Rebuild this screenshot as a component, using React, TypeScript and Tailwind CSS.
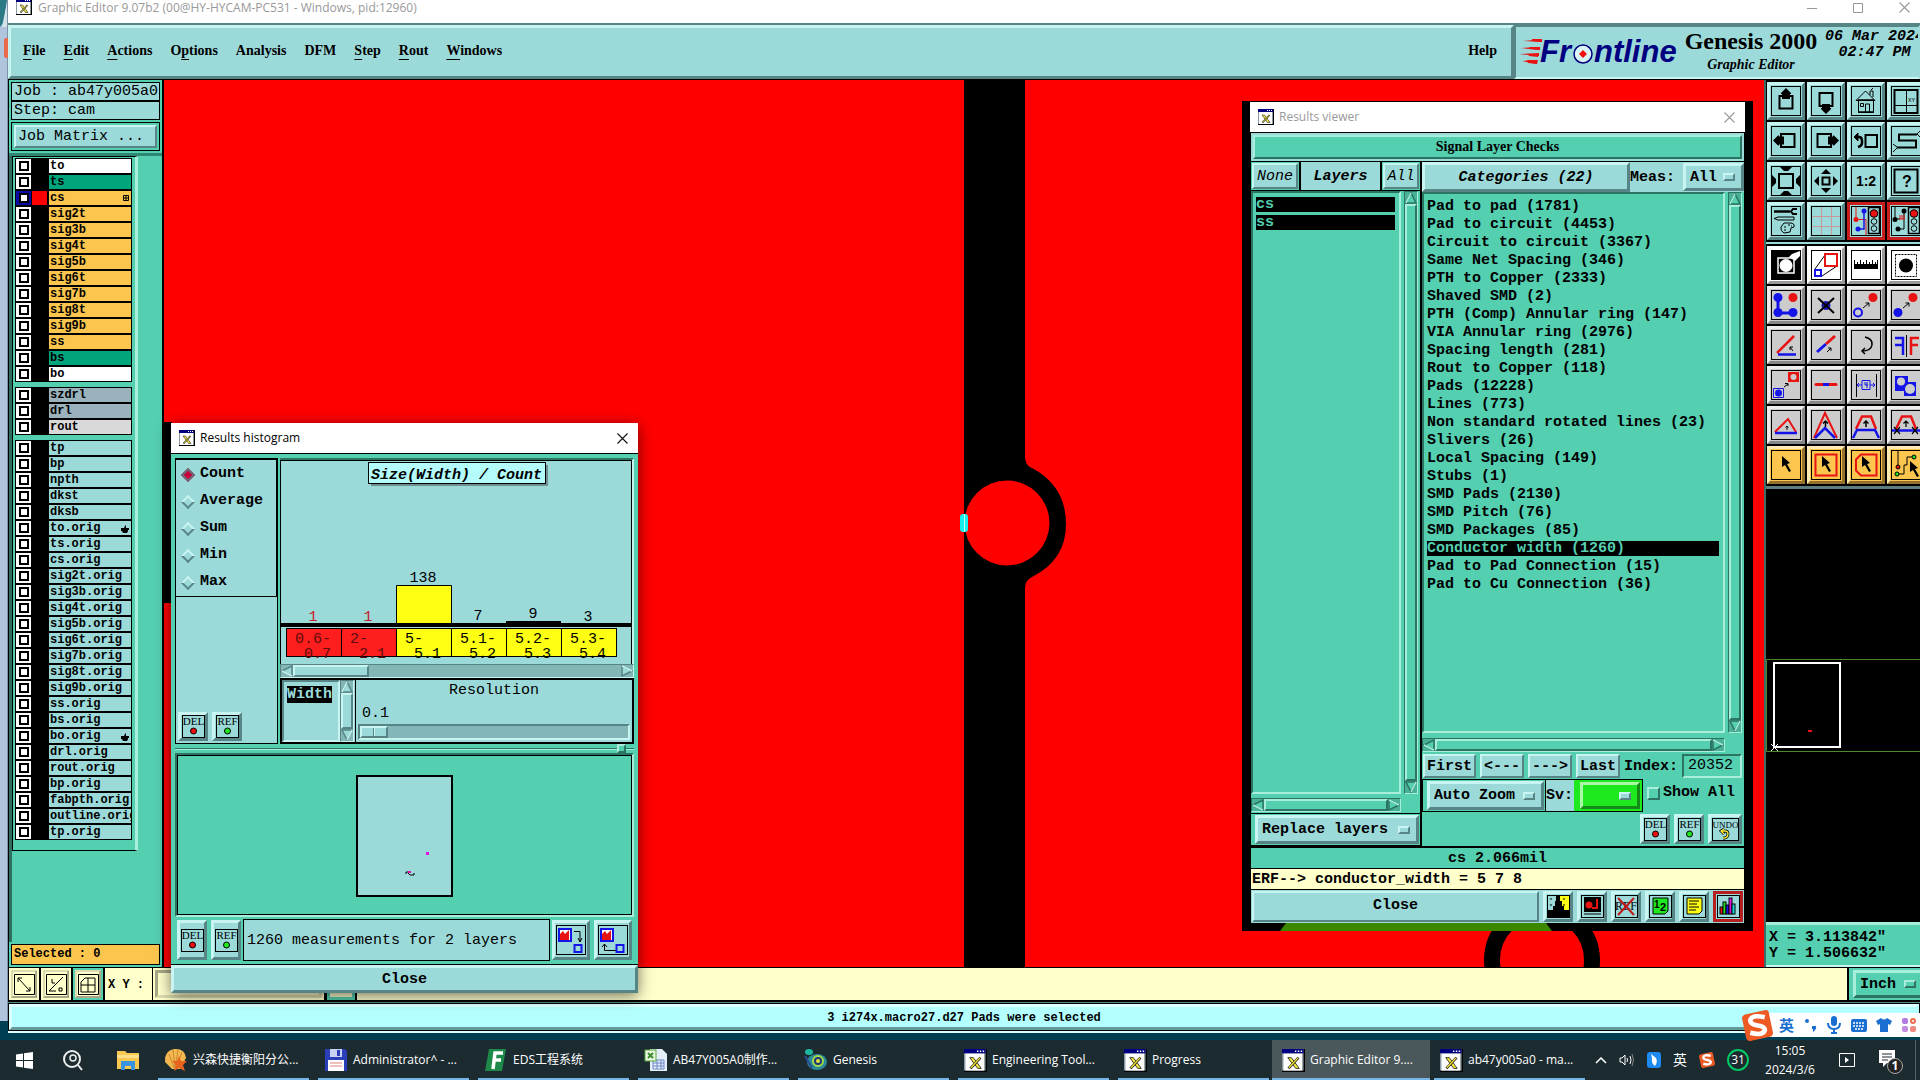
import { ReactNode } from "react";
import clsx from "clsx";

const mono = "font-['Liberation_Mono',monospace]";
const serif = "font-['Liberation_Serif',serif]";
const sans = "font-['Open_Sans','Noto_Sans_CJK_SC',sans-serif]";

const raised =
  "border-t-[#c8f4f2] border-l-[#c8f4f2] border-b-[#578585] border-r-[#578585] bg-[#9cdada]";
const raisedTeal =
  "border-t-[#a9eedb] border-l-[#a9eedb] border-b-[#2c7462] border-r-[#2c7462] bg-[#54cfb0]";
const sunkenTeal =
  "border-t-[#2c7462] border-l-[#2c7462] border-b-[#a9eedb] border-r-[#a9eedb] bg-[#54cfb0]";
const sunken =
  "border-t-[#578585] border-l-[#578585] border-b-[#c8f4f2] border-r-[#c8f4f2] bg-[#9cdada]";

const layerGroups = [
  [
    { name: "to", bg: "bg-white" },
    { name: "ts", bg: "bg-[#00a57c]" },
    { name: "cs", bg: "bg-[#fcc54e]", active: true },
    { name: "sig2t", bg: "bg-[#fcc54e]" },
    { name: "sig3b", bg: "bg-[#fcc54e]" },
    { name: "sig4t", bg: "bg-[#fcc54e]" },
    { name: "sig5b", bg: "bg-[#fcc54e]" },
    { name: "sig6t", bg: "bg-[#fcc54e]" },
    { name: "sig7b", bg: "bg-[#fcc54e]" },
    { name: "sig8t", bg: "bg-[#fcc54e]" },
    { name: "sig9b", bg: "bg-[#fcc54e]" },
    { name: "ss", bg: "bg-[#fcc54e]" },
    { name: "bs", bg: "bg-[#00a57c]" },
    { name: "bo", bg: "bg-white" },
  ],
  [
    { name: "szdrl", bg: "bg-[#9ab2bc]" },
    { name: "drl", bg: "bg-[#9ab2bc]" },
    { name: "rout", bg: "bg-[#d9d9d9]" },
  ],
  [
    "tp", "bp", "npth", "dkst", "dksb", "to.orig", "ts.orig", "cs.orig",
    "sig2t.orig", "sig3b.orig", "sig4t.orig", "sig5b.orig", "sig6t.orig",
    "sig7b.orig", "sig8t.orig", "sig9b.orig", "ss.orig", "bs.orig", "bo.orig",
    "drl.orig", "rout.orig", "bp.orig", "fabpth.orig", "outline.orig", "tp.orig",
  ].map((name) => ({ name, bg: "bg-[#9cdada]" })),
] as { name: string; bg: string; active?: boolean }[][];

const categories = [
  "Pad to pad (1781)",
  "Pad to circuit (4453)",
  "Circuit to circuit (3367)",
  "Same Net Spacing (346)",
  "PTH to Copper (2333)",
  "Shaved SMD (2)",
  "PTH (Comp) Annular ring (147)",
  "VIA Annular ring (2976)",
  "Spacing length (281)",
  "Rout to Copper (118)",
  "Pads (12228)",
  "Lines (773)",
  "Non standard rotated lines (23)",
  "Slivers (26)",
  "Local Spacing (149)",
  "Stubs (1)",
  "SMD Pads (2130)",
  "SMD Pitch (76)",
  "SMD Packages (85)",
  "Conductor width (1260)",
  "Pad to Pad Connection (15)",
  "Pad to Cu Connection (36)",
];

const bins = [
  { from: "0.6-", to: "0.7", count: 1, y: 160, red: true },
  { from: "2-", to: "2.1", count: 1, y: 160, red: true },
  { from: "5-", to: "5.1", count: 138, y: 121 },
  { from: "5.1-", to: "5.2", count: 7, y: 159 },
  { from: "5.2-", to: "5.3", count: 9, y: 157 },
  { from: "5.3-", to: "5.4", count: 3, y: 160 },
];

const XIcon = ({ size = 16 }: { size?: number }) => (
  <svg width={size} height={size} viewBox="0 0 16 16" className="shrink-0">
    <rect x="0" y="0" width="16" height="16" fill="#000" />
    <rect x="0" y="0" width="15" height="15" fill="#8a9aa0" />
    <rect x="1" y="3" width="13" height="12" fill="#fff" />
    <rect x="0" y="0" width="15" height="3" fill="#000080" />
    <path d="M9 1.500h1M11 1.500h1M13 1.500h1" stroke="#fff" />
    <path d="M4 6h2.500L12 13.500H9.500z" fill="#f3e63a" stroke="#222" strokeWidth="0.600" />
    <path d="M11.500 6L4.500 13.500" stroke="#222" strokeWidth="1.800" />
    <path d="M11.200 6.200L4.800 13" stroke="#f3e63a" strokeWidth="0.900" />
  </svg>
);

const CloseX = ({ color }: { color: string }) => (
  <svg width="11" height="11" viewBox="0 0 11 11">
    <path d="M0.5 0.5l10 10M10.500 0.5l-10 10" stroke={color} strokeWidth="1.100" />
  </svg>
);

const Arrow = ({ dir, teal }: { dir: "up" | "down" | "left" | "right"; teal?: boolean }) => {
  const turn = { up: 0, right: 90, down: 180, left: 270 }[dir];
  const dark = teal ? "#2c7462" : "#578585";
  const light = teal ? "#a9eedb" : "#c8f4f2";
  return (
    <svg width="12" height="12" viewBox="0 0 12 12" className="shrink-0">
      <path d="M6 1L11 11H1z" transform={`rotate(${turn} 6 6)`} fill={teal ? "#54cfb0" : "#9cdada"} stroke={dark} strokeWidth="1.500" />
      <path d="M6 1L1 11" transform={`rotate(${turn} 6 6)`} stroke={light} strokeWidth="1.500" />
    </svg>
  );
};

const Scrollbar = ({ vertical, teal, thumb }: { vertical?: boolean; teal?: boolean; thumb: string }) => (
  <div
    className={clsx(
      "flex shrink-0 items-stretch border",
      vertical ? "w-3.5 flex-col" : "h-3.5",
      teal ? "border-t-[#2c7462] border-l-[#2c7462] border-b-[#a9eedb] border-r-[#a9eedb] bg-[#48b196]" : "border-t-[#578585] border-l-[#578585] border-b-[#c8f4f2] border-r-[#c8f4f2] bg-[#83b7b7]"
    )}
  >
    <Arrow dir={vertical ? "up" : "left"} teal={teal} />
    <div className="flex min-h-0 min-w-0 flex-1 items-stretch">
      <div className={clsx("border-2", thumb, teal ? raisedTeal : raised)} />
    </div>
    <Arrow dir={vertical ? "down" : "right"} teal={teal} />
  </div>
);

const OptionMenu = ({ label, value, className, teal }: { label: string; value: string; className?: string; teal?: boolean }) => (
  <div className={clsx("flex items-center border-3 pr-1.5", className, !className?.includes("bg-[#1ee81e]") && (teal ? raisedTeal : raised))}>
    <select aria-label={label} className={clsx("min-w-0 flex-1 appearance-none bg-transparent pt-px pl-1 text-[15px] leading-5 font-bold outline-none", mono)}>
      <option>{value}</option>
    </select>
    <span className={clsx("h-2 w-3 shrink-0 border-2", teal ? raisedTeal : raised)} />
  </div>
);

const TextBtn = ({ text, dot, className }: { text: string; dot?: string; className?: string }) => (
  <button aria-label={text} className={clsx("flex items-center justify-center border-3", raised, className)}>
    <svg width={text === "UNDO" ? 27 : 23} height="23" viewBox={text === "UNDO" ? "0 0 27 23" : "0 0 23 23"}>
      <rect x="0.5" y="0.5" width={text === "UNDO" ? 26 : 22} height="22" fill="none" stroke="#000" />
      <text x={text === "UNDO" ? 13.500 : 11.500} y="10" textAnchor="middle" fontFamily="Liberation Serif, serif" fontSize={text === "UNDO" ? 9 : 11}>
        {text}
      </text>
      {dot ? (
        <circle cx="11.500" cy="16" r="3" fill={dot} stroke="#000" />
      ) : (
        <g fill="none">
          <path d="M10 13h3q3 0 3 3t-3 4h-2M12 11l-3 2 3 3" stroke="#000" strokeWidth="2.800" />
          <path d="M10 13h3q3 0 3 3t-3 4h-2M12 11l-3 2 3 3" stroke="#f6e73a" strokeWidth="1.300" />
        </g>
      )}
    </svg>
  </button>
);

const R = "#e81414";
const B = "#1414e8";

const Light = () => (
  <g>
    <rect x="17.500" y="1.500" width="11" height="26" fill="none" stroke="#000" strokeWidth="1.500" />
    <circle cx="23" cy="7.500" r="3.800" fill={R} stroke="#000" />
    <circle cx="23" cy="15.500" r="2.800" fill="none" stroke="#000" />
    <circle cx="23" cy="22.500" r="2.800" fill="none" stroke="#000" />
  </g>
);

const cursor = "M11 6l8 7-3 1 4 7-2 1-4-7-3 2z";

const viewTools: { name: string; icon: ReactNode; hot?: boolean }[] = [
  { name: "Pan up", icon: <><path d="M8.500 10h13v12.500h-13z" fill="none" stroke="#000" strokeWidth="2" /><path d="M15 2l5 5v1h-1v5h-8V8h-1V7z" /></> },
  { name: "Pan down", icon: <><path d="M8.500 7h13v13h-13z" fill="none" stroke="#000" strokeWidth="2" /><path d="M15 28l5-5v-1h-1v-4h-8v4h-1v1z" /></> },
  { name: "Home", icon: <g fill="none" stroke="#000"><path d="M5 14.500L14.500 5 24 14.500zM7.500 14.500v12h15v-12M19 9V5h3v6M20 4l2-2M14.500 26v-8h4v8M9.500 17.500h3v3h-3z" /><path d="M7 14h16M7 26h16" strokeWidth="1.500" /></g> },
  { name: "Zoom to XY", icon: <><path d="M3.500 4h23v23h-23z" fill="none" stroke="#000" strokeWidth="2" /><path d="M15.500 4v23M4 19.500h22" stroke="#000" /><text x="17" y="16" fontSize="6" fontFamily="Liberation Mono">XY</text></> },
  { name: "Pan left", icon: <><path d="M10 8h13.500v13H10z" fill="none" stroke="#000" strokeWidth="2" /><path d="M2 14.500l5-5h1v1h5v8H8v1H7z" /></> },
  { name: "Pan right", icon: <><path d="M6.500 8H20v13H6.500z" fill="none" stroke="#000" strokeWidth="2" /><path d="M28 14.500l-5-5h-1v1h-5v8h5v1h1z" /></> },
  { name: "Previous view", icon: <g fill="none" stroke="#000"><path d="M14.500 9H26v12H14.500z" strokeWidth="2" /><path d="M4 11h4q3 0 3 4v2q0 3-4 4" strokeWidth="2.500" /><path d="M7 7l-4 4 4 4z" fill="#000" /></g> },
  { name: "Snake", icon: <g fill="none" stroke="#000"><path d="M26 8.500H8v6h17v7H6" strokeWidth="2" /><path d="M26 8l3-3M26 8l3 3M6 21l-4-3M6 22l-4 4" /></g> },
  { name: "Zoom in", icon: <><path d="M8 8h14v14H8z" fill="none" stroke="#000" strokeWidth="2" /><path d="M9 1h12l-4 4h-4zM9 29h12l-4-4h-4zM1 9v12l4-4v-4zM29 9v12l-4-4v-4z" /></> },
  { name: "Zoom out", icon: <><path d="M11.500 11.500h7v7h-7z" fill="none" stroke="#000" strokeWidth="2" /><path d="M15 3l5 5H10zM15 27l5-5H10zM3 15l5-5v10zM27 15l-5-5v10z" /></> },
  { name: "Zoom 1:2", icon: <text x="15" y="20" textAnchor="middle" fontSize="14" fontWeight="bold" fontFamily="Liberation Sans">1:2</text> },
  { name: "Query", icon: <><path d="M3.500 3.500h23v23h-23z" fill="none" stroke="#000" strokeWidth="2" /><text x="16" y="21" textAnchor="middle" fontSize="16" fontWeight="bold" fontFamily="Liberation Sans">?</text></> },
  { name: "Settings", icon: <g fill="none" stroke="#000"><path d="M3 5.500h16" strokeWidth="2.500" /><path d="M26 3h-4l-2 2.500 2 2.500h4" strokeWidth="2" /><path d="M3 12.500l4-1.500h16v3H7z" /><path d="M13 17h6q5 0 4 4l-3 1-1 4-6 1q-4-2-3-6z" /><path d="M13 21h2M17 19h2M13 24h2M20 20h1" /></g> },
  { name: "Grid", icon: <path d="M10.500 1v28M20.500 1v28M1 10.500h28M1 20.500h28" stroke="#c9989c" /> },
  { name: "Net check", hot: true, icon: <><path d="M5 1v13M5 13.500h10V29" fill="none" stroke={R} /><path d="M13 4v19H7" fill="none" stroke={B} strokeWidth="1.500" /><circle cx="5" cy="13.500" r="2.500" fill={R} /><circle cx="13" cy="5" r="2.500" fill={B} /><circle cx="7" cy="23" r="2.500" fill={B} /><Light /></> },
  { name: "Spacing check", hot: true, icon: <><path d="M4 1v13M4 13h5M13 4v19H7" fill="none" stroke="#000" /><path d="M8 13h6M9 9v4M11 9v4M13 9v4" stroke={R} /><circle cx="4" cy="13.500" r="2.500" /><circle cx="13" cy="5" r="2.500" /><circle cx="7" cy="23" r="2.500" /><Light /></> },
];

const editTools: { name: string; tone: "white" | "gray" | "gold"; icon: ReactNode }[] = [
  { name: "Negative", tone: "white", icon: <><path d="M1 1h28v28H1z" /><path d="M7 8h16v15H7z" fill="none" stroke="#fff" strokeWidth="1.500" /><circle cx="15" cy="15.500" r="6.500" fill="#fff" /><path d="M18 7l3-3 8-3v5l-5 5z" fill="#fff" /></> },
  { name: "Scale", tone: "white", icon: <><path d="M4 19L14 5M11 26l15-10" stroke="#000" /><path d="M14 4h12v12H14z" fill="none" stroke={R} strokeWidth="2" /><path d="M4 20h6v6H4z" fill="none" stroke={B} strokeWidth="2" /></> },
  { name: "Ruler", tone: "white", icon: <><path d="M3 14h24v5H3z" /><path d="M3.500 10v5M6.500 12v3M9.500 10v5M12.500 12v3M15.500 10v5M18.500 12v3M21.500 10v5M24.500 12v3M26.500 10v5" stroke="#000" /></> },
  { name: "Pad select", tone: "white", icon: <><path d="M4.500 4.500h21v22h-21z" fill="none" stroke="#000" strokeDasharray="2 1" /><circle cx="15" cy="15.500" r="7" /></> },
  { name: "Move points", tone: "gray", icon: <><path d="M7 8v15h14" fill="none" stroke={B} strokeWidth="3" /><circle cx="7" cy="7.500" r="4.500" fill={B} /><circle cx="7" cy="22.500" r="4.500" fill={B} /><circle cx="22" cy="22.500" r="4.500" fill={B} /><circle cx="22" cy="7.500" r="4.500" fill={R} /></> },
  { name: "Delete", tone: "gray", icon: <><circle cx="15" cy="15.500" r="4.500" fill="#1a1ab8" /><path d="M7 8l16 15M23 8L7 23" stroke="#000" strokeWidth="2" /></> },
  { name: "Copy", tone: "gray", icon: <><circle cx="22" cy="7.500" r="4.500" fill={R} /><circle cx="7" cy="22.500" r="4" fill="none" stroke={B} strokeWidth="2" /><path d="M12 18l6-5M14.500 13H18v3.500" fill="none" stroke="#000" /></> },
  { name: "Move", tone: "gray", icon: <><circle cx="22" cy="7.500" r="4.500" fill={R} /><circle cx="7" cy="22.500" r="4.500" fill={B} /><path d="M12 18l6-5M14.500 13H18v3.500" fill="none" stroke="#000" /></> },
  { name: "Rotate line", tone: "gray", icon: <><path d="M6 23L23 6" stroke={R} strokeWidth="2.500" /><path d="M7 24.500h18" stroke={B} strokeWidth="2.500" /><path d="M22 21l-3-4M19 20v-3h3" fill="none" stroke="#000" /></> },
  { name: "Extend line", tone: "gray", icon: <><path d="M6 22l9-8" stroke={B} strokeWidth="3" /><path d="M15 14l9-8" stroke={R} strokeWidth="3" /><path d="M16 22l4-4M17 18h3v3" fill="none" stroke="#000" /></> },
  { name: "Arc", tone: "gray", icon: <g fill="none" stroke="#000" strokeWidth="1.500"><path d="M14 7q8 2 7 8-1 6-10 6M14 18l-3 3 3 3" /></g> },
  { name: "Mirror", tone: "gray", icon: <><path d="M4 8h8v17M4 15h8" fill="none" stroke={B} strokeWidth="2.500" /><path d="M15.500 5v22" stroke="#000" /><path d="M28 8h-8v17M20 15h7" fill="none" stroke={R} strokeWidth="2.500" /></> },
  { name: "Change symbol", tone: "gray", icon: <><path d="M17 2h11v10H17z" fill={R} /><circle cx="22.500" cy="7" r="3" fill="#ccc" /><path d="M2.500 18.500h10v9h-10z" fill="none" stroke={B} /><circle cx="7.500" cy="23" r="3.500" fill={B} /><path d="M13 17l4-3M14 13.500h3V16" fill="none" stroke="#000" /></> },
  { name: "Break line", tone: "gray", icon: <><path d="M5 14.500h20" stroke={R} strokeWidth="3" strokeLinecap="round" /><path d="M12 14.500h6" stroke={B} strokeWidth="3" /></> },
  { name: "Line gap", tone: "gray", icon: <g fill="none" stroke={B}><path d="M5.500 4v23M25.500 4v23" stroke="#000" /><path d="M11 10.500h8v9h-8zM6 15h5M19 15h5M8 13l-2 2 2 2M22 13l2 2-2 2M14 12v3h3M16 12v6" /></g> },
  { name: "Merge", tone: "gray", icon: <><path d="M4 6h13v6h8v14H13v-5H4z" fill={B} /><circle cx="10" cy="11.500" r="4" fill="#ccc" /><circle cx="19" cy="19" r="5" fill="#ccc" /></> },
  { name: "Triangle", tone: "gray", icon: <><path d="M4 22L17 9l8 13" fill="none" stroke={R} strokeWidth="2" /><path d="M4 23h22" stroke={B} strokeWidth="2.500" /><path d="M16 20v-4M14.500 17.500L16 16l1.500 1.500" fill="none" stroke="#000" /></> },
  { name: "Peak", tone: "gray", icon: <><path d="M3 28L14 3l12 25" fill="none" stroke={R} strokeWidth="2" /><path d="M4 28l10-10 10 10" fill="none" stroke={B} strokeWidth="2.500" /><path d="M14.500 17v-6M12 13.500l2.500-2.500 2.500 2.500" fill="none" stroke="#000" strokeWidth="1.500" /></> },
  { name: "Trapeze", tone: "gray", icon: <><path d="M5 19L11 6.500h9L25 19" fill="none" stroke={R} strokeWidth="2.500" /><path d="M2 28l4-8h18l4 8" fill="none" stroke={B} strokeWidth="2.500" /><path d="M15 17v-6M12.500 13.500L15 11l2.500 2.500" fill="none" stroke="#000" strokeWidth="1.500" /></> },
  { name: "Trapeze cut", tone: "gray", icon: <><path d="M5 19L11 6.500h9L25 19" fill="none" stroke={R} strokeWidth="2.500" /><path d="M1 20.500h28" stroke={B} strokeWidth="2.500" /><path d="M15 17v-6M12.500 13.500L15 11l2.500 2.500M3 17l6 7M9 17l-6 7M21 17l6 7M27 17l-6 7" fill="none" stroke="#000" strokeWidth="1.200" /></> },
  { name: "Select", tone: "gold", icon: <path d={cursor} /> },
  { name: "Frame select", tone: "gold", icon: <><path d="M4.500 4.500h21v21h-21z" fill="none" stroke={R} strokeWidth="2" /><path d={cursor} /></> },
  { name: "Polygon select", tone: "gold", icon: <><path d="M10 4.500h15.500v21H10l-5-5v-11z" fill="none" stroke={R} strokeWidth="2" /><path d={cursor} /></> },
  { name: "Net select", tone: "gold", icon: <><path d="M7 1v16M7 24h6v-9h3V7h7" fill="none" stroke="#000" /><circle cx="7" cy="17" r="2" fill={R} stroke="#000" /><circle cx="6" cy="24" r="2" fill="#1ee81e" stroke="#000" /><circle cx="23" cy="7" r="2" fill="#1ee81e" stroke="#000" /><path d={cursor} transform="translate(8 5)" /></> },
];

const tones = {
  white: "bg-white border-t-white border-l-white border-b-[#999] border-r-[#999]",
  gray: "bg-[#ccc] border-t-[#eee] border-l-[#eee] border-b-[#888] border-r-[#888]",
  gold: "bg-[#fcc54e] border-t-[#ffe9b4] border-l-[#ffe9b4] border-b-[#94712c] border-r-[#94712c]",
};

const ToolButton = ({ name, className, children }: { name: string; className: string; children: ReactNode }) => (
  <button aria-label={name} className={clsx("flex h-[38px] w-[38px] items-center justify-center border-3", className)}>
    <svg width="30" height="30" viewBox="0 0 30 30">
      <rect x="0.5" y="0.5" width="29" height="29" fill="none" stroke="#000" />
      {children}
    </svg>
  </button>
);

const MenuBar = () => {
  const menus = [
    ["", "F", "ile"],
    ["", "E", "dit"],
    ["", "A", "ctions"],
    ["O", "p", "tions"],
    ["Analysis", "", ""],
    ["DFM", "", ""],
    ["", "S", "tep"],
    ["", "R", "out"],
    ["", "W", "indows"],
  ];
  return (
    <header className="flex h-[57px] border-t-2 border-b border-t-[#578585] border-b-black bg-[#9cdada]">
      <nav className={clsx("flex flex-1 items-center gap-[18px] border-3 pr-3.5 pb-0.5 pl-3 text-sm font-bold", raised, serif)}>
        {menus.map(([pre, key, post]) => (
          <button key={pre + key + post}>
            {pre}
            <span className="underline decoration-1 underline-offset-4">{key}</span>
            {post}
          </button>
        ))}
        <button className="ml-auto">Help</button>
      </nav>
      <div className="flex w-[406px] shrink-0 overflow-hidden border-2 border-t-[#578585] border-r-transparent border-b-[#c8f4f2] border-l-[#578585] pl-0.5">
        <svg width="163" height="50" viewBox="0 0 163 50" className="shrink-0">
          <g fill={R}>
            <path d="M5 14l19-2v3zM2 21l20-1v3zM1 27l20-1v3zM4 34l15-1v4z" />
            <path d="M14 12h10l-1 3-9-1zM11 20h11l-1 3-9-1zM10 27h11l-1 3-9-1zM9 33h11l-1 4-9-1z" />
          </g>
          <g fill="#000080" fontFamily="Liberation Sans" fontWeight="bold" fontStyle="italic" fontSize="31">
            <text x="22" y="35">Fr</text>
            <text x="76" y="35">ntline</text>
          </g>
          <circle cx="65" cy="27" r="9" fill="#d9f4f4" stroke="#000080" strokeWidth="1.500" />
          <path d="M65 23l4 4-4 4-4-4z" fill="#f01010" />
        </svg>
        <div className={clsx("flex w-[140px] shrink-0 flex-col items-center font-bold", serif)}>
          <span className="text-2xl leading-7 whitespace-nowrap">Genesis 2000</span>
          <span className="text-sm leading-5 italic">Graphic Editor</span>
        </div>
        <div className={clsx("ml-1 pt-0.5 text-center text-[15px] leading-4 font-bold whitespace-nowrap italic", mono)}>
          <p>06 Mar 2024</p>
          <p>02:47 PM</p>
        </div>
      </div>
    </header>
  );
};

const LayerPanel = () => (
  <aside className={clsx("flex w-[156px] shrink-0 flex-col border-r-2 border-l border-black bg-[#54cfb0]", mono)}>
    <div className="border-b-3 border-[#2f8672] px-0.5 py-0.5 text-[15px]">
      <p className="h-[19px] border border-black bg-[#9cdada] px-0.5 leading-[18px] whitespace-pre">Job : ab47y005a0</p>
      <p className="h-[19px] border border-black bg-[#9cdada] px-0.5 leading-[18px] whitespace-pre">Step: cam</p>
      <div className="mt-0.5 border border-black p-0.5">
        <button className={clsx("block w-full border-2 px-0.5 text-left leading-[19px]", raised)}>Job Matrix ...</button>
      </div>
    </div>
    <div className="flex flex-1 flex-col items-start border-l-3 border-[#2f6e60]">
      <div className="flex w-[126px] flex-col gap-[5px] border border-r-3 border-black border-r-[#a9eedb] pt-px pr-[3px] pb-2.5 pl-0.5">
        {layerGroups.map((group, i) => (
          <ul key={i} className="bg-black px-px">
            {group.map((layer) => (
              <li key={layer.name + i} className="flex h-4 items-stretch border-t border-b border-black">
                <label className="flex w-full items-stretch">
                  <span className={clsx("flex w-[15px] shrink-0 items-center justify-center", layer.active ? "bg-[#0a0aa8]" : "bg-white")}>
                    <input type="checkbox" className="size-2.5 appearance-none border-2 border-black bg-white" />
                  </span>
                  <span className={clsx("mx-px w-[15px] shrink-0", layer.active ? "bg-[#ff0000]" : "bg-black")} />
                  <span className={clsx("relative ml-px flex flex-1 items-center overflow-hidden pl-px text-xs leading-[14px] font-bold", layer.bg)}>
                    {layer.name}
                    {layer.active && (
                      <svg width="6" height="6" className="absolute top-1 right-0.5"><path d="M.5.5h5v5h-5zM3 0v6M0 3h6" fill="none" stroke="#000" /></svg>
                    )}
                    {(layer.name === "to.orig" || layer.name === "bo.orig") && (
                      <svg width="8" height="8" viewBox="0 0 8 8" className="absolute top-1 right-0.5"><path d="M0 3h3l1-2 1-1 0 3h3v2H7v1L6 8H2L1 6H0z" /></svg>
                    )}
                  </span>
                </label>
              </li>
            ))}
          </ul>
        ))}
      </div>
    </div>
    <p className="mx-0.5 mt-0.5 mb-0.5 h-[21px] border border-black bg-[#fcc54e] px-0.5 text-xs leading-[18px] font-bold whitespace-pre">Selected : 0</p>
  </aside>
);

const Histogram = () => (
  <svg width="100%" height="204" className="block border border-b-0 border-black font-['Liberation_Mono',monospace] text-[15px]">
    <rect x="90" y="4" width="177" height="21" fill="#6f8f93" />
    <rect x="87.500" y="1.500" width="177" height="21" fill="#b4fcfc" stroke="#000" />
    <text x="90" y="18" fontWeight="bold" fontStyle="italic">Size(Width) / Count</text>
    <path d="M115.500 162V124.500h55V162" fill="#ffff14" stroke="#000" />
    <rect x="225" y="160" width="55" height="3" />
    <rect x="0" y="162" width="100%" height="4" />
    {bins.map((bin, i) => (
      <g key={bin.from}>
        <text x={5 + i * 55 + 27} y={bin.y} textAnchor="middle" fill={bin.red ? "#c8202a" : "#000"}>{bin.count}</text>
        <rect x={5.500 + i * 55} y="167.500" width="55" height="28" fill={bin.red ? "#ff1e1e" : "#ffff14"} stroke="#000" />
        <text x={14 + i * 55} y="182" fill={bin.red ? "#5c0d0d" : "#000"}>{bin.from}</text>
        <text x={23 + i * 55} y="197" fill={bin.red ? "#5c0d0d" : "#000"}>{bin.to}</text>
      </g>
    ))}
  </svg>
);

const HistogramWindow = () => (
  <section className={clsx("absolute top-[423px] left-[163px] z-10 flex w-[467px] flex-col bg-[#54cfb0] shadow-[0_3px_14px_rgba(0,0,0,0.55)]", mono)}>
    <div className={clsx("flex h-[30px] items-center gap-[5px] bg-white pr-2.5 pl-2 text-xs", sans)}>
      <XIcon />
      <h2 className="flex-1">Results histogram</h2>
      <button aria-label="Close window"><CloseX color="#111" /></button>
    </div>
    <div className="border-t border-black px-1 pt-1">
      <div className="flex h-[286px] gap-0.5">
        <div className="flex w-[103px] flex-col border border-black bg-[#9cdada]">
          <fieldset className="flex flex-col border-t border-r border-b border-black pt-px pl-[7px] text-[15px] font-bold">
            {["Count", "Average", "Sum", "Min", "Max"].map((name, i) => (
              <label key={name} className="flex h-[27px] items-center gap-[7px]">
                <input
                  type="radio"
                  name="stat"
                  defaultChecked={i === 0}
                  className="size-2.5 rotate-45 appearance-none border-2 border-t-[#c8f4f2] border-r-[#578585] border-b-[#578585] border-l-[#c8f4f2] checked:border-[#6b6b78] checked:bg-[#c8003c]"
                />
                {name}
              </label>
            ))}
          </fieldset>
          <div className="mt-auto flex gap-1 p-0.5">
            <TextBtn text="DEL" dot="#f01010" className="h-[29px] w-[30px]" />
            <TextBtn text="REF" dot="#1ee81e" className="h-[29px] w-[30px]" />
          </div>
        </div>
        <div className="flex min-w-0 flex-1 flex-col">
          <div className="border-t-2 border-r-2 border-t-[#2c7462] border-r-[#c8f4f2] bg-[#9cdada]">
            <Histogram />
          </div>
          <Scrollbar thumb="w-[76px]" />
          <div className="flex flex-1 border-2 border-black bg-[#9cdada]">
            <div className={clsx("w-[58px] border-2 py-[5px] pl-[3px] text-[15px] leading-[15px] font-bold", sunken)}>
              <span className="bg-black text-[#9cdada]">Width</span>
            </div>
            <Scrollbar vertical thumb="w-full h-full" />
            <div className="ml-px flex flex-1 flex-col border-l border-black px-0.5 pb-0.5">
              <p className="pt-0.5 text-center text-[15px] leading-[18px]">Resolution</p>
              <label className="mt-auto text-[15px] leading-5">
                <span className="pl-1">0.1</span>
                <span className={clsx("flex h-4 border-2", sunken)}>
                  <input
                    type="range"
                    aria-label="Resolution"
                    min="0"
                    max="100"
                    defaultValue="0"
                    className="h-full w-full appearance-none bg-[#83b7b7] [&::-webkit-slider-thumb]:h-3 [&::-webkit-slider-thumb]:w-7 [&::-webkit-slider-thumb]:appearance-none [&::-webkit-slider-thumb]:border-2 [&::-webkit-slider-thumb]:border-t-[#c8f4f2] [&::-webkit-slider-thumb]:border-r-[#578585] [&::-webkit-slider-thumb]:border-b-[#578585] [&::-webkit-slider-thumb]:border-l-[#c8f4f2] [&::-webkit-slider-thumb]:bg-[linear-gradient(90deg,#9cdada_45%,#578585_45%,#578585_50%,#c8f4f2_50%,#c8f4f2_55%,#9cdada_55%)]"
                  />
                </span>
              </label>
            </div>
          </div>
        </div>
      </div>
      <div className="flex h-[9px] items-center">
        <div className="h-0.5 flex-1 border-t border-b border-t-[#2c7462] border-b-[#a9eedb]" />
        <div className={clsx("size-[9px] border-2", raisedTeal)} />
        <div className="h-0.5 w-2 border-t border-b border-t-[#2c7462] border-b-[#a9eedb]" />
      </div>
      <div className={clsx("flex h-[164px] justify-center border-2", sunkenTeal)}>
        <svg width="455" height="160" className="block border border-black">
          <rect x="179" y="20" width="95" height="120" fill="#9cdada" stroke="#000" strokeWidth="2" />
          <rect x="248" y="96" width="3" height="3" fill="#e014e0" />
          <path d="M228 118v-2h3M230 117l2 2h4v-2" fill="none" stroke="#000" />
          <rect x="230" y="115" width="3" height="2" fill="#e014b0" />
        </svg>
      </div>
      <div className="mt-0.5 flex h-[42px] items-stretch gap-0.5 pl-0.5">
        <TextBtn text="DEL" dot="#f01010" className="my-px w-[30px]" />
        <TextBtn text="REF" dot="#1ee81e" className="my-px ml-0.5 w-[30px]" />
        <p className="flex flex-1 items-center border border-black bg-[#9cdada] px-[3px] pt-0.5 text-[15px] whitespace-pre">1260 measurements for 2 layers</p>
        <button aria-label="Copy to layer" className={clsx("my-px flex w-[38px] items-center justify-center border-3", raised)}>
          <svg width="30" height="30"><rect x="0.5" y="0.5" width="29" height="29" fill="none" stroke="#000" /><path d="M3 4h12v12H3z" fill="#fff" stroke={B} strokeWidth="2" /><path d="M4 15V9l3-3 2 3 4-4v10z" fill={R} /><path d="M18.500 20h7v7h-7z" fill="none" stroke={B} strokeWidth="2" /><path d="M18 6.500h6v10M22 13l2 4 2-4" fill="none" stroke="#000" /></svg>
        </button>
        <button aria-label="Copy from layer" className={clsx("my-px mr-0.5 ml-0.5 flex w-[38px] items-center justify-center border-3", raised)}>
          <svg width="30" height="30"><rect x="0.5" y="0.5" width="29" height="29" fill="none" stroke="#000" /><path d="M3 4h12v12H3z" fill="#fff" stroke={B} strokeWidth="2" /><path d="M4 15V9l3-3 2 3 4-4v10z" fill={R} /><path d="M18.500 20h7v7h-7z" fill="none" stroke={B} strokeWidth="2" /><path d="M18 25.500H6.500v-6M4 22l2.500-3L9 22" fill="none" stroke="#000" /></svg>
        </button>
      </div>
    </div>
    <div className="mt-[3px] border-t border-black">
      <button className={clsx("block h-7 w-full border-3 pt-px text-[15px] leading-5 font-bold", raised)}>Close</button>
    </div>
  </section>
);

const resultTools: { name: string; icon: ReactNode; hot?: boolean }[] = [
  { name: "Highlight", icon: <><rect x="12" y="1" width="10" height="16" fill="#ffff14" /><path d="M9 1h4v5h2v5h2v4h5v7H1v-7h5v-4h2V6h1z" /><path d="M4 3v2M4 9v2M17 3v2M17 9v2" stroke="#000" /></> },
  { name: "Snapshot", icon: <><rect x="3" y="2" width="17" height="15" /><circle cx="8" cy="10" r="3.500" fill={R} /><path d="M11 13h5V4" fill="none" stroke={R} strokeWidth="2" /><path d="M3 19h17" stroke="#000" /></> },
  { name: "Cancel reference", icon: <><text x="11" y="15" textAnchor="middle" fontSize="12" fontFamily="Liberation Serif">REF</text><path d="M3 3l16 17M19 3L3 20" stroke="#c01818" strokeWidth="2" /></> },
  { name: "Fraction", icon: <><path d="M4 3h15v13l-3 3H4z" fill="#1ee81e" stroke="#000" /><text x="5" y="13" fontSize="10" fontWeight="bold" fontFamily="Liberation Sans">1</text><text x="11" y="16" fontSize="11" fontWeight="bold" fontFamily="Liberation Sans">2</text></> },
  { name: "Report", icon: <><path d="M4 3h15v13l-3 3H4z" fill="#ffff14" stroke="#000" /><path d="M6 6h10M6 9h8M6 12h10M6 15h7" stroke="#000" /></> },
  { name: "Histogram", hot: true, icon: <g stroke="#000"><rect x="3" y="12" width="3" height="7" fill={R} /><rect x="6" y="7" width="3" height="12" fill="#1ee81e" /><rect x="9" y="10" width="3" height="9" fill={B} /><rect x="12" y="3" width="3" height="16" fill="#e014e0" /><rect x="15" y="9" width="3" height="10" fill="#14dcdc" /></g> },
];

const ResultsWindow = () => (
  <section className={clsx("absolute top-[21px] right-[11px] w-[511px] bg-black px-2 pt-px text-[15px]", mono)}>
    <div className={clsx("flex h-[30px] items-center gap-[5px] bg-white pr-2.5 pl-2 text-xs text-[#999]", sans)}>
      <XIcon />
      <h2 className="flex-1">Results viewer</h2>
      <button aria-label="Close window"><CloseX color="#999" /></button>
    </div>
    <div className="mt-px border-r border-l border-black">
      <div className="h-7 bg-[#9cdada] p-0.5">
        <h3 className={clsx("h-full border-2 text-center text-sm leading-5 font-bold", raisedTeal, serif)}>Signal Layer Checks</h3>
      </div>
      <div className="mt-px flex h-[684px] bg-[#54cfb0]">
        <div className="flex w-[171px] shrink-0 flex-col border-r-2 border-black">
          <div className="flex h-[29px] items-stretch border-b border-black">
            <button className={clsx("m-px w-[46px] border-2 pt-0.5 leading-5 italic", raised)}>None</button>
            <span className="flex-1 border-r-2 border-l-2 border-black bg-[#9cdada] pt-px text-center leading-7 font-bold italic">Layers</span>
            <button className={clsx("m-px w-9 border-2 pt-0.5 leading-5 italic", raised)}>All</button>
          </div>
          <div className="flex min-h-0 flex-1 gap-[3px]">
            <ul className={clsx("flex flex-1 flex-col gap-[3px] border-2 pt-1 pr-1 pl-[3px] font-bold", sunkenTeal)}>
              <li className="bg-black leading-[15px] text-[#54cfb0]">cs</li>
              <li className="bg-black leading-[15px] text-[#54cfb0]">ss</li>
            </ul>
            <Scrollbar vertical teal thumb="w-full" />
            <span className="-ml-[3px] w-0.5" />
          </div>
          <div className="mt-1 mr-[19px] mb-px flex flex-col"><Scrollbar teal thumb="w-full" /></div>
          <div className="flex h-[33px] border-t border-b border-black py-px pr-px pl-1">
            <OptionMenu label="Layer display" value="Replace layers" className="flex-1" />
          </div>
        </div>
        <div className="flex min-w-0 flex-1 flex-col">
          <div className="flex h-[30px] shrink-0 items-stretch bg-[#9cdada]">
            <button className={clsx("w-[208px] border-3 pt-0.5 leading-[22px] font-bold italic", raised)}>Categories (22)</button>
            <span className="flex-1 pt-0.5 leading-7 font-bold">Meas:</span>
            <OptionMenu label="Measurements" value="All" className="my-px w-[61px] shrink-0" />
          </div>
          <div className="flex h-[541px] gap-[3px] pr-0.5">
            <ul className={clsx("flex-1 border-2 pt-[5px] pr-1 pl-[3px] font-bold whitespace-pre", sunkenTeal)}>
              {categories.map((text) => (
                <li key={text} className="h-[18px] pb-[3px]">
                  <span className={clsx("block leading-[15px]", text.startsWith("Conductor") && "bg-black text-[#54cfb0]")}>{text}</span>
                </li>
              ))}
            </ul>
            <Scrollbar vertical teal thumb="w-full" />
          </div>
          <div className="mt-[5px] mr-[19px] flex flex-col"><Scrollbar teal thumb="w-full" /></div>
          <div className="mt-0.5 flex h-6 items-stretch gap-1 pr-0.5 pl-px">
            <button className={clsx("w-[53px] border-2 pt-0.5 leading-4 font-bold", raised)}>First</button>
            <button className={clsx("w-11 border-2 pt-0.5 leading-4 font-bold", raised)}>&lt;---</button>
            <button className={clsx("w-11 border-2 pt-0.5 leading-4 font-bold", raised)}>---&gt;</button>
            <button className={clsx("w-11 border-2 pt-0.5 leading-4 font-bold", raised)}>Last</button>
            <label htmlFor="index" className="pt-px leading-6 font-bold">Index:</label>
            <input id="index" defaultValue="20352" className={clsx("min-w-0 flex-1 border-2 pl-1", sunkenTeal)} />
          </div>
          <div className="mt-px flex h-[33px] shrink-0 items-stretch">
            <div className="flex w-[124px] border border-black py-px pr-px pl-1">
              <OptionMenu label="Zoom mode" value="Auto Zoom" className="flex-1" />
            </div>
            <div className="flex w-[97px] border border-l-0 border-black">
              <span className="w-7 bg-[#9cdada] pt-0.5 leading-7 font-bold">Sv:</span>
              <div className="flex flex-1 bg-[#1ee81e] py-0.5 pr-0.5 pl-1.5">
                <OptionMenu label="Severity" value="" className="flex-1 border-t-[#a8f8a8] border-r-[#168a16] border-b-[#168a16] border-l-[#a8f8a8] bg-[#1ee81e]" />
              </div>
            </div>
            <label className="flex h-7 items-center gap-[3px] pl-1 font-bold">
              <input type="checkbox" className={clsx("size-[13px] appearance-none border-2", raisedTeal)} />
              Show All
            </label>
          </div>
          <div className="flex h-[34px] items-start justify-end gap-1 pt-0.5 pr-0.5">
            <TextBtn text="DEL" dot="#f01010" className="h-[30px] w-[30px]" />
            <TextBtn text="REF" dot="#1ee81e" className="h-[30px] w-[30px]" />
            <TextBtn text="UNDO" className="h-[30px] w-[34px]" />
          </div>
        </div>
      </div>
      <p className="mt-0.5 h-5 bg-[#54cfb0] pt-px text-center leading-5 font-bold">cs 2.066mil</p>
      <p className="mt-px h-5 bg-[#ffffcc] px-px pt-px leading-5 font-bold">ERF--&gt; conductor_width = 5 7 8</p>
      <div className="mt-px flex h-[33px] items-stretch gap-1 bg-[#9cdada] px-px py-px">
        <button className={clsx("flex-1 border-2 font-bold", raised)}>Close</button>
        {resultTools.map((tool) => (
          <button
            key={tool.name}
            aria-label={tool.name}
            className={clsx("flex w-[30px] items-center justify-center border-3 bg-[#9cdada]", tool.hot ? "border-[#b82020]" : raised)}
          >
            <svg width="23" height="23"><rect x="0.5" y="0.5" width="22" height="22" fill="none" stroke="#000" />{tool.icon}</svg>
          </button>
        ))}
      </div>
    </div>
    <svg width="495" height="8" className="block"><path d="M36 0h260l6 8H30z" fill="#3c8700" /></svg>
  </section>
);

const Canvas = () => (
  <main className="relative min-w-0 flex-1 overflow-hidden bg-[#ff0000]">
    <svg width="100%" height="100%" className="block">
      <rect x="0" y="342" width="8" height="181" />
      <path d="M800 0h61v378q1 8 7 10 34 18 34 56 0 36-34 53-7 3-7 12V1400h-61z" />
      <circle cx="843" cy="443" r="42.500" fill="#ff0000" />
      <circle cx="1378" cy="880" r="50" fill="none" stroke="#000" strokeWidth="16" />
      <rect x="796" y="434" width="8" height="18" rx="3" fill="#14f0f0" />
      <path d="M800.500 434v18" stroke="#c8ffff" />
    </svg>
    <ResultsWindow />
  </main>
);

const ToolPanel = () => (
  <aside className={clsx("flex w-[156px] shrink-0 flex-col overflow-hidden border-l-2 border-[#3c6e64]", mono)}>
    <div className="grid grid-cols-[repeat(4,38px)] gap-0.5 border-b-2 border-[#9cdada] bg-black py-0.5 pl-px">
      {viewTools.map((tool) => (
        <ToolButton key={tool.name} name={tool.name} className={tool.hot ? "border-[#c81e1e] bg-[#9cdada]" : raised}>
          {tool.icon}
        </ToolButton>
      ))}
    </div>
    <div className="grid grid-cols-[repeat(4,38px)] gap-0.5 border-b-3 border-[#5d7f7f] bg-black py-0.5 pl-px">
      {editTools.map((tool) => (
        <ToolButton key={tool.name} name={tool.name} className={tones[tool.tone]}>
          {tool.icon}
        </ToolButton>
      ))}
    </div>
    <svg className="min-h-0 w-full flex-1 bg-black" height="100">
      <path d="M200 170.500H.5v92H200" fill="none" stroke="#4a8a2c" />
      <rect x="8" y="174" width="66" height="84" fill="none" stroke="#fff" strokeWidth="2" />
      <rect x="42" y="241" width="4" height="2" fill={R} />
      <path d="M5 255l7 7M12 255l-7 7" stroke="#fff" />
    </svg>
    <div className="border-t-3 border-b-2 border-t-[#a9eedb] border-b-[#c8f4f2] bg-[#54cfb0] pt-[5px] pb-[3px] pl-[3px] text-[15px] leading-4 font-bold whitespace-pre">
      <p>X = 3.113842"</p>
      <p>Y = 1.506632"</p>
    </div>
  </aside>
);

const CommandBar = () => (
  <div className="flex h-[35px] items-stretch border-t border-b-2 border-l border-black bg-[#ffffcc]">
    {[
      "M4 4l12 13M4 8V4h4M16 13v4h-4",
      "M3 17L17 3M3 17h7M6 5v4h3M13 14h3v3h-3z",
      "M3 8l4-4h10v14H3zM10 4v14M3 11h14",
    ].map((d, i) => (
      <div key={d} className={clsx("flex w-8 border-r-2 border-black p-0.5", i === 2 && "bg-[#54cfb0]")}>
        <button aria-label={["Distance", "Angle", "Snap"][i]} className="flex flex-1 items-center justify-center border-2 border-t-[#dcdcb0] border-r-[#a8a888] border-b-[#a8a888] border-l-[#dcdcb0] bg-[#ffffcc]">
          <svg width="21" height="21"><path d="M.5.5h20v20H.5z" fill="none" stroke="#000" /><path d={d} fill="none" stroke="#000" /></svg>
        </button>
      </div>
    ))}
    <label htmlFor="xy" className={clsx("w-[47px] pt-px pl-[3px] text-xs leading-8 font-bold whitespace-nowrap", mono)}>X Y :</label>
    <div className="w-[173px] border-r border-l border-black p-0.5">
      <input id="xy" className="h-full w-full border-3 border-t-[#a8a888] border-r-[#dcdcb0] border-b-[#dcdcb0] border-l-[#a8a888]" />
    </div>
    <div className="w-8 border-r-2 border-l-2 border-black bg-[#54cfb0]">
      <button aria-label="Apply" className="h-full w-full border-3 border-[#54cfb0] bg-[#ffffcc]" />
    </div>
    <div className="ml-auto flex w-[73px] overflow-hidden border-l-2 border-black bg-[#54cfb0] py-0.5 pl-1">
      <OptionMenu label="Units" value="Inch" teal className="w-[72px] shrink-0" />
    </div>
  </div>
);

const SogouS = ({ size }: { size: number }) => (
  <svg width={size} height={size} viewBox="0 0 30 30" className="shrink-0">
    <path d="M4 4l19-4q3 0 3 3l4 19q0 3-3 4L8 30q-3 0-4-3L0 8q0-3 4-4z" fill="#ee5a24" />
    <path d="M22 7q-13-3-14 3 0 4 7 5 8 1 7 5-2 5-14 2" fill="none" stroke="#fff" strokeWidth="4.500" />
  </svg>
);

const ImeBar = () => (
  <div className={clsx("absolute right-0 bottom-10 z-20 flex h-[30px] items-center text-[#1a6fd0]", sans)}>
    <div className="z-10 -mr-1"><SogouS size={31} /></div>
    <div className="flex h-6 w-[151px] items-center justify-between bg-white pr-1 pl-2.5">
      <button className="text-[15px] leading-6 font-bold">英</button>
      <svg width="14" height="14"><circle cx="3" cy="3" r="2" fill="#1a6fd0" /><path d="M8 8h4q1 3-3 6l0-3h-1z" fill="#1a6fd0" /></svg>
      <svg width="14" height="18"><rect x="4" y="0" width="6" height="10" rx="3" fill="#1a6fd0" /><path d="M1 7q0 6 6 6t6-6M7 13v4M4 17h6" fill="none" stroke="#1a6fd0" strokeWidth="2" /></svg>
      <svg width="16" height="13"><rect width="16" height="13" rx="2" fill="#1a6fd0" /><path d="M2 4h12M2 7h12M4 10h8" stroke="#fff" strokeWidth="1.500" strokeDasharray="2 1" /></svg>
      <svg width="16" height="14"><path d="M5 0q3 3 6 0l5 3-2 4-2-1v8H4V6L2 7 0 3z" fill="#1a6fd0" /></svg>
      <svg width="14" height="14"><rect width="6" height="6" rx="2" fill="#b27be0" /><rect x="9" y="1" width="4" height="4" rx="2" fill="none" stroke="#ee7050" strokeWidth="2" /><rect y="8" width="6" height="6" rx="2" fill="#c08ce0" /><rect x="8" y="8" width="6" height="6" rx="2" fill="#f08a80" /></svg>
    </div>
  </div>
);

const tasks: { text: string; icon: ReactNode; active?: boolean }[] = [
  { text: "兴森快捷衡阳分公...", icon: <svg width="24" height="24"><path d="M1 14Q0 3 10 1q11-1 12 9l-6 11H8z" fill="#f4b850" /><path d="M5 6l5 14M9 2l2 18M14 2l-3 18M18 4l-6 16" stroke="#c88a30" /><path d="M15 8l2 5 6 0-4 4 2 6-6-3-5 3 2-6-4-4h5z" fill="#e8641e" /></svg> },
  { text: "Administrator^ - ...", icon: <svg width="24" height="24"><path d="M1 1h20l2 2v20H1z" fill="#2a3fb8" /><rect x="6" y="1" width="12" height="8" fill="#c8d4f4" /><rect x="13" y="2" width="3" height="6" fill="#2a3fb8" /><rect x="4" y="12" width="16" height="11" fill="#fff" /><path d="M6 15h12M6 18h12" stroke="#e08080" /></svg> },
  { text: "EDS工程系统", icon: <svg width="24" height="24"><path d="M5 1h17l-4 22H1z" fill="#1e8a4a" /><path d="M9 21l2-16h8M10 12h7" fill="none" stroke="#fff" strokeWidth="3.500" /></svg> },
  { text: "AB47Y005A0制作...", icon: <svg width="24" height="24"><path d="M6 1h12l5 5v17H6z" fill="#e6eefa" /><path d="M9 12h11v9H9zM9 15h11M9 18h11M13 12v9M17 12v9" fill="none" stroke="#6a8ac8" /><rect x="1" y="2" width="11" height="11" fill="#e8f6e0" stroke="#5aa83c" /><path d="M4 5l5 5M9 5l-5 5" stroke="#3c8a2c" strokeWidth="2" /></svg> },
  { text: "Genesis", icon: <svg width="24" height="24"><ellipse cx="13" cy="14" rx="10" ry="8" fill="#2a8a98" /><circle cx="14" cy="13" r="5" fill="#1a3a78" stroke="#a8d848" strokeWidth="2" /><circle cx="14" cy="13" r="2" fill="#e8e040" /><ellipse cx="5" cy="4" rx="4" ry="3" fill="#1eb8a0" /><path d="M1 8l7 12" stroke="#284a90" strokeWidth="2" /></svg> },
  { text: "Engineering Tool...", icon: <XIcon size={23} /> },
  { text: "Progress", icon: <XIcon size={23} /> },
  { text: "Graphic Editor 9....", icon: <XIcon size={23} />, active: true },
  { text: "ab47y005a0 - ma...", icon: <XIcon size={23} /> },
];

const Taskbar = () => (
  <footer className={clsx("flex h-10 shrink-0 items-stretch bg-[#1c2b30] text-xs text-white", sans)}>
    <div className="flex w-[158px] shrink-0 items-center pl-4">
      <button aria-label="Start"><svg width="17" height="17"><path d="M0 2.500l7-1V8H0zM8 1.300L17 0v8H8zM0 9h7v6.500l-7-1zM8 9h9v8l-9-1.300z" fill="#fff" /></svg></button>
      <button aria-label="Search" className="ml-[30px]"><svg width="20" height="22"><circle cx="9" cy="10" r="8" fill="none" stroke="#eee" strokeWidth="2" /><circle cx="10" cy="9" r="3" fill="none" stroke="#eee" strokeWidth="1.500" /><path d="M15 16l4 5" stroke="#eee" strokeWidth="2" /></svg></button>
      <button aria-label="File Explorer" className="ml-[34px]"><svg width="22" height="20"><path d="M0 1h8l2 2h12v16H0z" fill="#f8c850" /><path d="M0 5h22v3H0z" fill="#ffe08a" /><path d="M4 20v-9h14v9h-4v-4H8v4z" fill="#3a94e0" /></svg></button>
    </div>
    <div className="flex min-w-0 gap-[9px]">
      {tasks.map((task) => (
        <button
          key={task.text}
          className={clsx(
            "flex items-center gap-[5px] overflow-hidden border-b-2 border-[#76b5e8] pt-0.5 pl-1.5 whitespace-nowrap",
            task.active ? "-mr-[5px] -ml-[6px] w-[158px] bg-[#4a575b] pl-2.5" : "w-[151px]"
          )}
        >
          {task.icon}
          <span>{task.text}</span>
        </button>
      ))}
    </div>
    <div className="ml-auto flex shrink-0 items-center gap-3 pr-1">
      <svg width="12" height="7"><path d="M1 6l5-5 5 5" fill="none" stroke="#fff" strokeWidth="1.500" /></svg>
      <svg width="16" height="14"><path d="M1 5h2l3-3v10L3 9H1zM8 5q1 2 0 4M11 3q2 4 0 8" fill="none" stroke="#fff" /><path d="M13 1q3 6 0 12" fill="none" stroke="#888" /></svg>
      <svg width="14" height="16"><rect width="14" height="16" rx="3" fill="#1e8af0" /><path d="M4 2l5 4q2 4-1 8-4-3-3-8z" fill="#fff" /></svg>
      <span className="text-sm">英</span>
      <SogouS size={16} />
      <span className="flex size-[22px] items-center justify-center rounded-full border-2 border-[#00c864]">31</span>
      <div className="w-[58px] text-center leading-[19px]"><p>15:05</p><p>2024/3/6</p></div>
      <svg width="16" height="16" className="ml-2"><path d="M.5 1.500h15v13H.5z" fill="none" stroke="#fff" /><path d="M6 5l4 3-4 3z" fill="#fff" /></svg>
      <div className="relative ml-3 h-7 w-6">
        <svg width="16" height="18" className="mt-1"><path d="M0 0h16v13H8l-4 4v-4H0z" fill="#fff" /><path d="M3 4h10M3 7h10M3 10h6" stroke="#1c2b30" /></svg>
        <span className="absolute right-0 bottom-0 flex size-4 items-center justify-center rounded-full border border-[#aaa] bg-[#222] font-bold">1</span>
      </div>
      <span className="h-full w-px bg-[#56646a]" />
    </div>
  </footer>
);

export default function App() {
  return (
    <div className="relative flex h-screen flex-col overflow-hidden bg-[#003f52] text-black">
      <div className="flex min-h-0 flex-1">
        <div className="mb-3 w-2 shrink-0 border-r border-[#7e93a8] bg-[#b0c4de]">
          <svg width="8" height="60" className="block"><path d="M0 0h7L4 22 0 27z" fill="#2c7a86" /><path d="M7 2v25H2z" fill="#d4e2ea" /><rect x="4" y="38" width="6" height="20" rx="2" fill="#e86a4a" /></svg>
        </div>
        <div className="relative flex min-w-0 flex-1 flex-col">
          <div className={clsx("flex h-[23px] shrink-0 items-start gap-1.5 bg-white pl-2 text-xs text-[#999]", sans)}>
            <div className="-mt-px"><XIcon /></div>
            <h1 className="flex-1 leading-4">Graphic Editor 9.07b2 (00@HY-HYCAM-PC531 - Windows, pid:12960)</h1>
            <div className="flex items-center gap-9 pt-0.5 pr-2.5">
              <button aria-label="Minimize"><svg width="10" height="10"><path d="M0 5.500h10" stroke="#999" /></svg></button>
              <button aria-label="Maximize"><svg width="10" height="10"><path d="M.5.5h9v9h-9z" fill="none" stroke="#999" /></svg></button>
              <button aria-label="Close"><CloseX color="#999" /></button>
            </div>
          </div>
          <MenuBar />
          <div className="flex min-h-0 flex-1">
            <LayerPanel />
            <Canvas />
            <ToolPanel />
          </div>
          <CommandBar />
          <div className="h-[31px] border-t border-b-2 border-t-[#578585] border-b-[#dcffff] bg-black p-px">
            <p className={clsx("h-full border-3 border-t-[#dcffff] border-r-[#b4ffff] border-b-[#699] border-l-[#dcffff] bg-[#b4ffff] pt-px text-center text-xs leading-5 font-bold", mono)}>
              3 i274x.macro27.d27 Pads were selected
            </p>
          </div>
          <HistogramWindow />
        </div>
      </div>
      <div className="h-[7px] shrink-0" />
      <Taskbar />
      <ImeBar />
    </div>
  );
}
